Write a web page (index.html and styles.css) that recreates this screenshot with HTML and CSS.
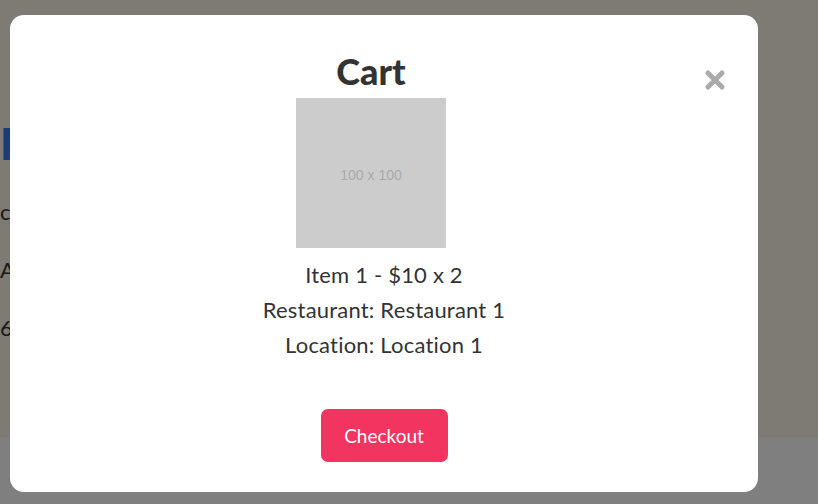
FILE: index.html
```html
<!DOCTYPE html>
<html lang="en">
<head>
    <meta charset="UTF-8">
    <title>Cart</title>
    <link rel="stylesheet" href="styles.css">
</head>
<body>
    <div class="page">
        <section class="hero">
            <h1 class="hero-title">Restaurants</h1>
            <p class="hero-text">choose a meal</p>
            <p class="hero-text">All restaurants</p>
            <p class="hero-text">6 open now</p>
        </section>
        <footer class="footer"></footer>
    </div>

    <div class="overlay"></div>

    <div class="modal">
        <div class="modal-head">
            <div class="head-main">
                <h2 class="modal-title">Cart</h2>
                <div class="thumb">100 x 100</div>
            </div>
            <button class="close" aria-label="Close">
                <svg width="22" height="22" viewBox="0 0 22 22">
                    <path d="M4 4 L18 18 M18 4 L4 18" stroke="#aaaaaa" stroke-width="5" stroke-linecap="round"/>
                </svg>
            </button>
        </div>
        <div class="cart-item">
            <p>Item 1 - $10 x 2</p>
            <p>Restaurant: Restaurant 1</p>
            <p>Location: Location 1</p>
        </div>
        <button class="checkout">Checkout</button>
    </div>
</body>
</html>
```

FILE: styles.css
```css
body {
    margin: 0;
    font-family: Lato, "Open Sans", sans-serif;
    color: #333;
    width: 818px;
    height: 504px;
    overflow: hidden;
}

/* page behind the modal */
.page {
    display: flex;
    flex-direction: column;
    height: 504px;
}

.hero {
    height: 437px;
    background-color: #fdf6e8;
    padding-top: 118px;
    box-sizing: border-box;
}

.hero-title {
    margin: 0 0 30px;
    font-size: 44px;
    font-weight: 900;
    color: #3e74f0;
    line-height: 50px;
}

.hero-text {
    margin: 0 0 30px;
    font-size: 22px;
    line-height: 28px;
}

.footer {
    flex: 1;
    background-color: #fff;
}

.overlay {
    position: fixed;
    inset: 0;
    background-color: rgba(0, 0, 0, 0.5);
}

/* cart modal */
.modal {
    position: absolute;
    left: 10px;
    top: 15px;
    width: 748px;
    height: 477px;
    box-sizing: border-box;
    padding: 36px 30px 0;
    background-color: #fff;
    border-radius: 14px;
    display: flex;
    flex-direction: column;
    align-items: center;
}

.modal-head {
    display: flex;
    width: 100%;
}

.head-main {
    flex: 1;
    display: flex;
    flex-direction: column;
    align-items: center;
}

.modal-title {
    margin: 0 0 7px;
    font-size: 36px;
    line-height: 40px;
    font-weight: 900;
    color: #333;
}

.thumb {
    width: 150px;
    height: 150px;
    padding-top: 4px;
    box-sizing: border-box;
    background-color: #cccccc;
    color: #aaaaaa;
    font-family: "Liberation Sans", Arial, sans-serif;
    font-size: 14px;
    display: flex;
    justify-content: center;
    align-items: center;
}

.close {
    width: 26px;
    height: 22px;
    margin-top: 18px;
    padding: 0;
    border: none;
    background: none;
    cursor: pointer;
}

.cart-item {
    margin-top: 9px;
    text-align: center;
}

.cart-item p {
    margin: 0;
    font-size: 22px;
    letter-spacing: 0.2px;
    line-height: 35px;
    color: #333;
}

.checkout {
    margin-top: 47px;
    width: 127px;
    height: 53px;
    padding: 0;
    border: none;
    border-radius: 7px;
    background-color: #f23460;
    color: #fff;
    font-family: Lato, "Open Sans", sans-serif;
    font-size: 19px;
    cursor: pointer;
}
```
